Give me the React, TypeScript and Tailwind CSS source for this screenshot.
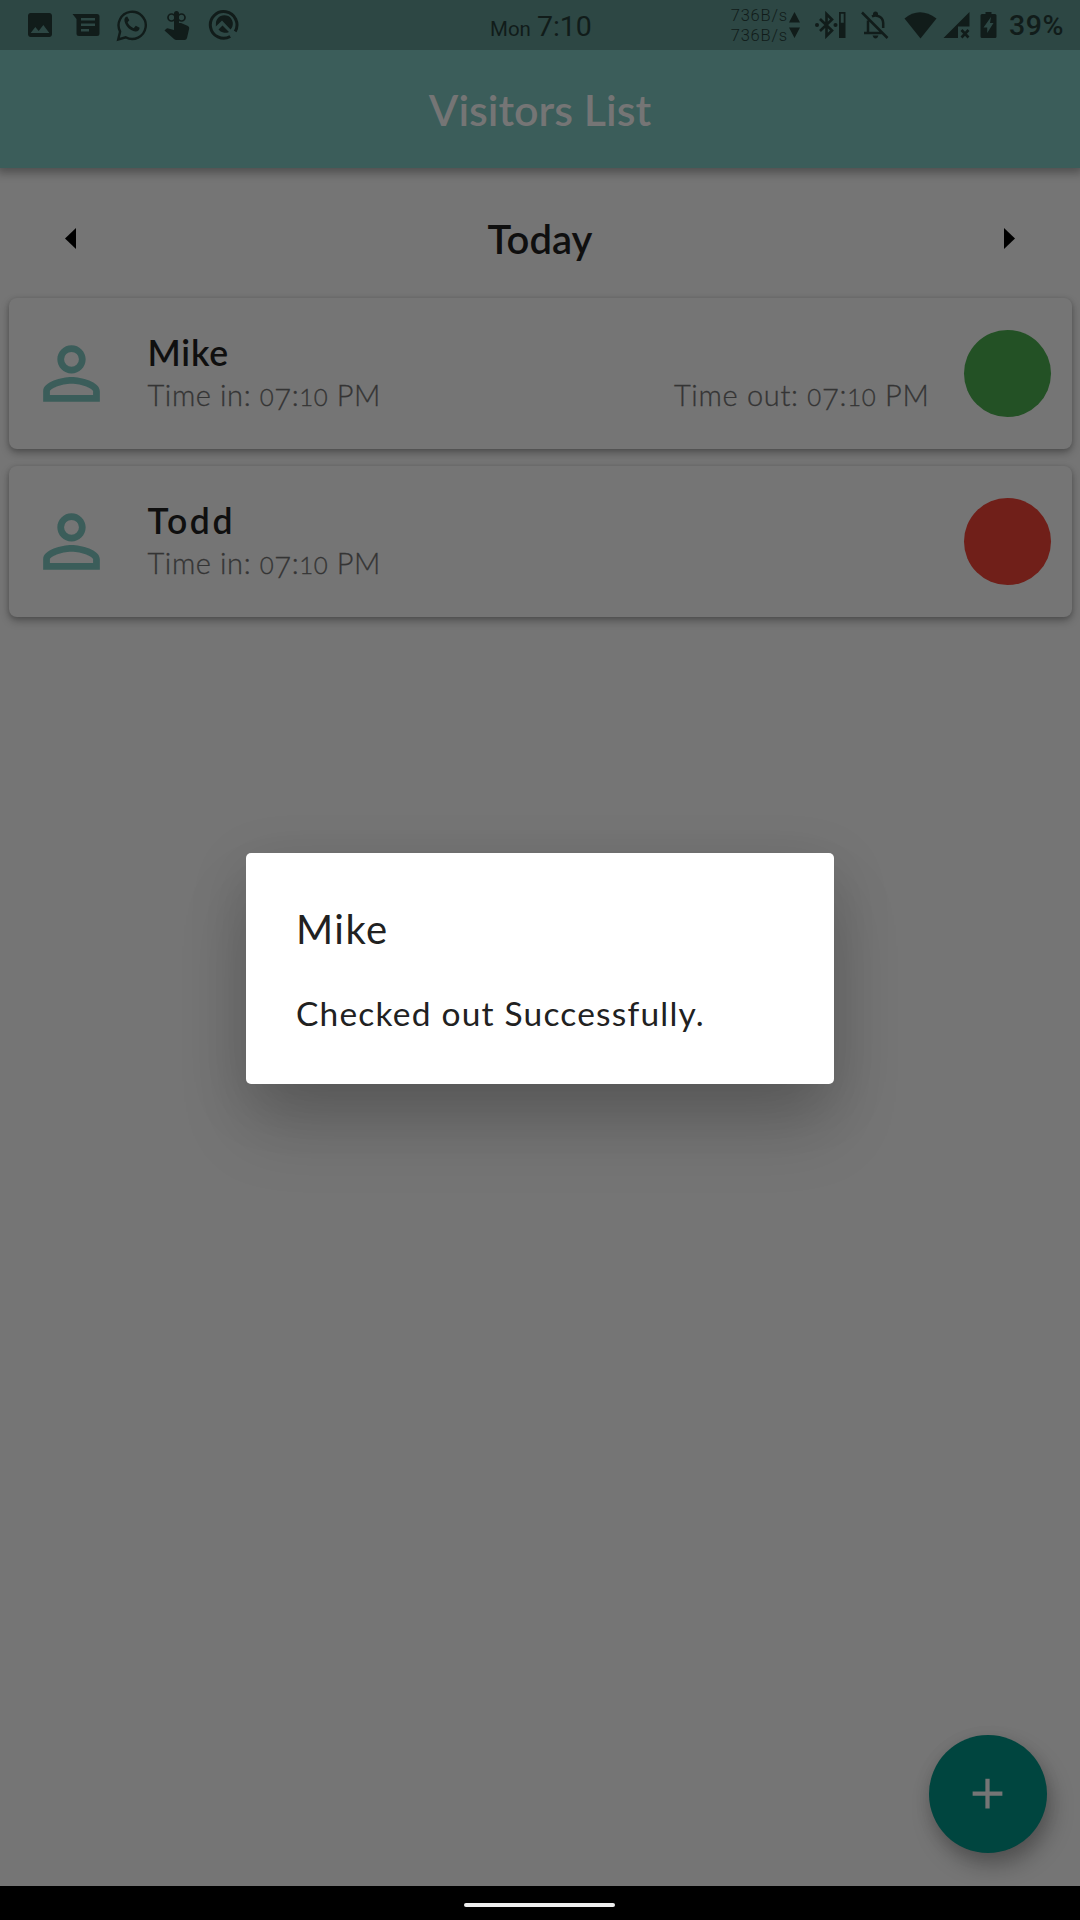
import React from 'react';
import { MdImage, MdPersonOutline, MdAdd } from 'react-icons/md';

function StatusBar() {
  return (
    <div className="relative h-[50px] bg-[#2d4744] text-[#111c1a] shrink-0">
      <div className="flex h-full items-center justify-between">
        <div className="flex items-center pl-[24px]">
          <MdImage size={32} />
          <svg className="ml-[16px]" width="28" height="24" viewBox="0 0 28 24" fill="currentColor">
            <path fillRule="evenodd" d="M.5 1H25q2.500 0 2.500 2.500v17q0 2.500-2.500 2.500H7q-2.500 0-2.500-2.500V6ZM9 5v2.500h14V5Zm0 5.500V13h14v-2.500ZM9 16v2.500h8V16Z" />
          </svg>
          <svg className="ml-[16px]" width="32" height="34" viewBox="0 0 32 34" fill="none" stroke="currentColor">
            <path d="M2.200 31.500 4.100 23.600A13.600 13.600 0 1 1 9.700 29.300Z" strokeWidth="2.400" />
            <path d="M11.200 8.500c-2.300.2-3.200 2.600-2.600 5 1.500 5.300 5.500 9.200 10.700 9.900 2.200.2 4.400-1 4.300-3.600l-3.800-2-2.100 2.400c-3-1.200-5-3.200-6.100-5.900l1.700-2Z" fill="currentColor" stroke="none" />
          </svg>
          <svg className="ml-[16px]" width="26" height="32" viewBox="0 0 26 32">
            <g fill="none" stroke="currentColor" strokeWidth="1.700"><circle cx="7.500" cy="8.500" r="3.500" /><circle cx="17.500" cy="8.500" r="3.500" /></g>
            <path fill="currentColor" d="M10 4.500a2.500 2.500 0 0 1 5 0V14h2l7 3q1.500 1 1.200 2.500L23 29q-.5 2-2.500 2h-8q-1.500 0-2.500-1L.5 21.500l1.800-1.800q1-.6 2-.3L10 21Z" />
          </svg>
          <svg className="ml-[18px]" width="32" height="32" viewBox="0 0 32 32">
            <path d="M22.200 27.500A13.300 13.300 0 1 1 27.200 22.500" fill="none" stroke="currentColor" strokeWidth="3" />
            <path d="m25 21 3.500 3.500-4 4-3.500-3.500Z" fill="#2d4744" />
            <path d="M8 13A8.500 8.500 0 1 1 22.500 20.500L14 11.500 7.800 17.500Zm2.500 7.500 4-4 6.500 6.500a8.600 8.600 0 0 1-10.500-2.500Z" fill="currentColor" />
          </svg>
        </div>
        <div className="flex items-center pr-[14px]">
          <div className="flex flex-col pt-[1px] font-['Roboto',sans-serif] text-[16.500px] font-light leading-[20px] tracking-[0.8px]">
            <span>736B/s</span>
            <span>736B/s</span>
          </div>
          <svg className="ml-[1px]" width="11" height="26" viewBox="0 0 11 26" fill="currentColor"><path d="M5.500 0 11 10.500H0ZM0 15.500h11L5.500 26Z" /></svg>
          <svg className="ml-[15px]" width="31" height="28" viewBox="0 0 31 28">
            <path d="m5 8 12 11.500-5.500 5.500V3L17 8.500 5 20" fill="none" stroke="currentColor" strokeWidth="2.600" />
            <circle cx="2" cy="14" r="2" fill="currentColor" /><circle cx="20.500" cy="14" r="2" fill="currentColor" />
            <path fillRule="evenodd" d="M24 1h6.500v26H24Zm1.800 1.800v9h2.900v-9Z" fill="currentColor" />
          </svg>
          <svg className="ml-[15px]" width="28" height="28" viewBox="0 0 28 28" fill="none" stroke="currentColor" strokeWidth="2.500">
            <path d="M1 1.500 26.500 27M7 9.500V21M3 22h18M11 5.500q3-1.500 6-.5 5 1.500 5.200 7V17" />
            <path d="M12 3q0-2.500 2.500-2.500T17 3v2h-5ZM11.500 24.500h6q-1 3-3 3t-3-3Z" fill="currentColor" stroke="none" />
          </svg>
          <svg className="ml-[15px]" width="33" height="28" viewBox="0 0 33 28" fill="currentColor"><path d="M.5 7.500Q15.500-5 32.500 7.500L16.500 27.500Z" /></svg>
          <svg className="ml-[6px]" width="27" height="28" viewBox="0 0 27 28">
            <path d="M26.500 1v14.500H15V27H.5Z" fill="currentColor" /><path d="m18.500 19 7 7.500m0-7.500-7 7.500" stroke="currentColor" strokeWidth="2.600" />
          </svg>
          <svg className="ml-[10px]" width="17" height="28" viewBox="0 0 17 28" fill="currentColor"><path fillRule="evenodd" d="M5.500 1h6v2H15q1.500 0 1.500 1.500v21Q16.500 27 15 27H2q-1.500 0-1.500-1.500v-21Q.5 3 2 3h3.500ZM11 6l-7.500 10.500h3.700V22L13.500 12H10Z" /></svg>
          <span className="ml-[12px] w-[57px] whitespace-nowrap pt-[2px] font-['Roboto',sans-serif] text-[28.500px] font-medium leading-[48px] tracking-[0.600px]">39%</span>
        </div>
      </div>
      <div className="absolute left-[490px] top-[9px] flex items-baseline font-['Roboto',sans-serif] leading-[36px]">
        <span className="text-[20.500px]">Mon</span>
        <span className="ml-[6px] text-[28.500px]">7:10</span>
      </div>
    </div>
  );
}

function Time({ label, className }: { label: string; className: string }) {
  return (
    <p className={`whitespace-nowrap text-[29px] font-light leading-[36px] text-[#343434] [-webkit-text-stroke:0.3px] ${className}`}>
      {label}: <span className="text-[24px]">0</span><span className="relative top-[4px]">7</span>:<span className="text-[24px]">10</span> PM
    </p>
  );
}

function VisitorCard({ name, out, dot, nameClass }: { name: string; out?: boolean; dot: string; nameClass: string }) {
  return (
    <div className="flex h-[151px] items-center rounded-[8px] bg-[#757575] pl-[20px] pr-[21px] shadow-[0_4px_8px_rgba(0,0,0,0.28),0_1px_5px_rgba(0,0,0,0.14)]">
      <MdPersonOutline size={85} color="#3b5d5a" />
      <div className="ml-[34px] flex flex-1 flex-col pt-[2px]">
        <h2 className={`relative -top-[2px] text-[35.500px] font-semibold leading-[44px] text-[#0f0f0f] ${nameClass}`}>{name}</h2>
        <div className="flex justify-between pr-[34px]">
          <Time label="Time in" className="tracking-[0.600px]" />
          {out && <Time label="Time out" className="tracking-[0.700px]" />}
        </div>
      </div>
      <div className={`size-[87px] rounded-full ${dot}`} />
    </div>
  );
}

export default function App() {
  return (
    <div className="relative flex h-[1920px] w-[1080px] flex-col overflow-hidden bg-[#757575] font-['Lato',sans-serif]">
      <StatusBar />
      <header className="flex h-[117.500px] shrink-0 items-center justify-center bg-[#3b5d5a] pt-[3px] shadow-[0_2px_9px_3px_rgba(0,0,0,0.32)]">
        <h1 className="text-[43px] font-semibold text-[#757575]">Visitors List</h1>
      </header>
      <div className="flex h-[130px] shrink-0 items-center justify-between px-[65px] pt-[12px]">
        <svg width="11" height="21" viewBox="0 0 11 21"><path d="M11 0v21L0 10.500Z" /></svg>
        <h2 className="text-[40px] font-semibold text-[#0f0f0f]">Today</h2>
        <svg width="11" height="21" viewBox="0 0 11 21"><path d="M0 0v21L11 10.500Z" /></svg>
      </div>
      <main className="flex flex-1 flex-col gap-[17px] px-[8.500px]">
        <VisitorCard name="Mike" out dot="bg-[#235125]" nameClass="tracking-[0.800px]" />
        <VisitorCard name="Todd" dot="bg-[#701f19]" nameClass="tracking-[2.600px]" />
      </main>
      <button className="absolute left-[928.500px] top-[1734.500px] flex size-[118px] items-center justify-center rounded-full bg-[#00453f] text-[#757575] shadow-[5px_13px_22px_rgba(0,0,0,0.26),0_4px_16px_rgba(0,0,0,0.1)]">
        <MdAdd size={51} />
      </button>
      <div role="dialog" className="absolute left-[246px] top-[852.500px] h-[231px] w-[588px] rounded-[5px] bg-white px-[50px] pt-[50px] text-[#212121] shadow-[0_45px_70px_-4px_rgba(0,0,0,0.17),0_16px_60px_rgba(0,0,0,0.13)]">
        <h3 className="text-[40px] leading-[52px] tracking-[1.500px]">Mike</h3>
        <p className="mt-[36px] whitespace-nowrap text-[33.500px] leading-[44px] tracking-[1.200px]">Checked out Successfully.</p>
      </div>
      <footer className="z-10 flex h-[34px] shrink-0 items-center justify-center bg-black pr-[2px] pt-[4px]">
        <div className="h-[4px] w-[151px] rounded-full bg-[#eee]" />
      </footer>
    </div>
  );
}
